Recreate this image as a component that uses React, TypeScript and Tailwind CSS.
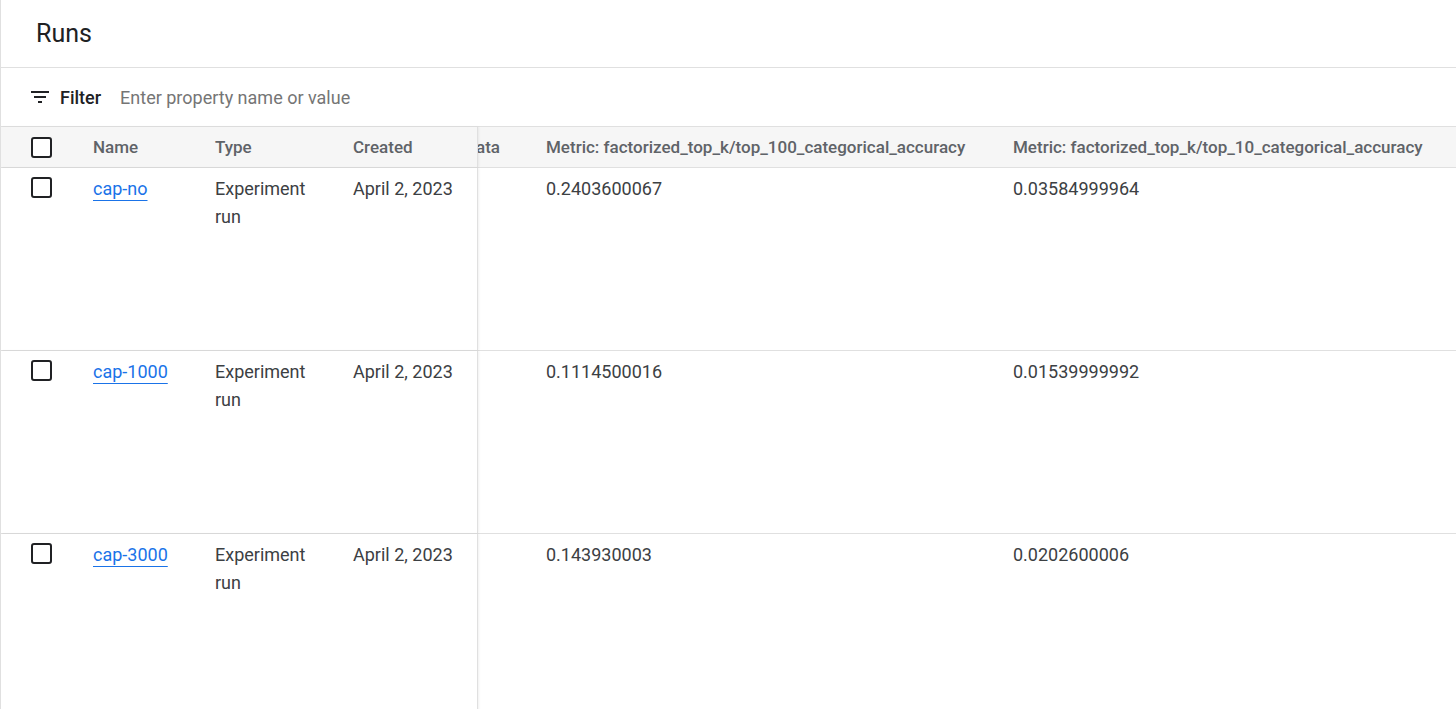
import React from "react";

interface Run {
  name: string;
  type: string;
  created: string;
  top100: string;
  top10: string;
}

const runs: Run[] = [
  { name: "cap-no", type: "Experiment run", created: "April 2, 2023", top100: "0.2403600067", top10: "0.03584999964" },
  { name: "cap-1000", type: "Experiment run", created: "April 2, 2023", top100: "0.1114500016", top10: "0.01539999992" },
  { name: "cap-3000", type: "Experiment run", created: "April 2, 2023", top100: "0.143930003", top10: "0.0202600006" },
];

function Checkbox() {
  return <div className="w-[21px] h-[21px] rounded-[3px] border-2 border-[#202124] bg-white" />;
}

function FilterIcon() {
  return (
    <svg width="24" height="24" viewBox="0 0 24 24" className="fill-[#202124]">
      <path d="M10 18h4v-2h-4v2zM3 6v2h18V6H3zm3 7h12v-2H6v2z" />
    </svg>
  );
}

function StickyPart({ children, header }: { children: React.ReactNode; header?: boolean }) {
  return (
    <div
      className={
        "flex w-[477px] shrink-0 border-r border-[#e0e0e0] shadow-[1px_0_2px_rgba(0,0,0,0.06)] relative z-10 " +
        (header ? "bg-[#f6f6f6] items-center" : "bg-white items-start")
      }
    >
      {children}
    </div>
  );
}

export default function App() {
  return (
    <div className="w-[1456px] h-[709px] overflow-hidden bg-white border-l border-[#e0e0e0] font-['Roboto','Liberation_Sans',sans-serif]">
      <div className="h-[68px] border-b border-[#e0e0e0] flex items-center pl-[35px]">
        <h1 className="text-[25px] text-[#202124] font-normal pt-[1px]">Runs</h1>
      </div>

      <div className="h-[59px] border-b border-[#e0e0e0] flex items-center pl-[27px]">
        <FilterIcon />
        <span className="ml-[8px] text-[18px] font-medium text-[#202124]">Filter</span>
        <span className="ml-[19px] text-[18px] text-[#757575]">Enter property name or value</span>
      </div>

      {/* header row */}
      <div className="flex h-[41px] border-b border-[#e0e0e0] bg-[#f6f6f6] text-[17px] font-medium text-[#5f6368]">
        <StickyPart header>
          <div className="w-[92px] pl-[30px] flex items-center">
            <Checkbox />
          </div>
          <div className="w-[122px] pt-[2px]">Name</div>
          <div className="w-[138px] pt-[2px]">Type</div>
          <div className="flex-1 pt-[2px]">Created</div>
        </StickyPart>
        <div className="flex-1 flex items-center overflow-hidden whitespace-nowrap pt-[2px]">
          <div className="w-[68px] shrink-0 flex justify-end overflow-hidden pr-[46px]">
            <span className="shrink-0">Metadata</span>
          </div>
          <div className="w-[467px] shrink-0">Metric: factorized_top_k/top_100_categorical_accuracy</div>
          <div className="shrink-0">Metric: factorized_top_k/top_10_categorical_accuracy</div>
        </div>
      </div>

      {runs.map((run) => (
        <div key={run.name} className="flex h-[183px] border-b border-[#e0e0e0] text-[18px] leading-[28px] text-[#3c4043]">
          <StickyPart>
            <div className="w-[92px] pl-[30px] pt-[9px]">
              <Checkbox />
            </div>
            <div className="w-[122px] pt-[7px]">
              <a href="#" className="text-[#1a73e8] underline underline-offset-[5px] decoration-1">
                {run.name}
              </a>
            </div>
            <div className="w-[138px] pt-[7px] pr-[20px]">{run.type}</div>
            <div className="flex-1 pt-[7px] whitespace-nowrap">{run.created}</div>
          </StickyPart>
          <div className="flex-1 flex items-start overflow-hidden whitespace-nowrap pt-[7px]">
            <div className="w-[68px] shrink-0" />
            <div className="w-[467px] shrink-0">{run.top100}</div>
            <div className="shrink-0">{run.top10}</div>
          </div>
        </div>
      ))}
    </div>
  );
}
